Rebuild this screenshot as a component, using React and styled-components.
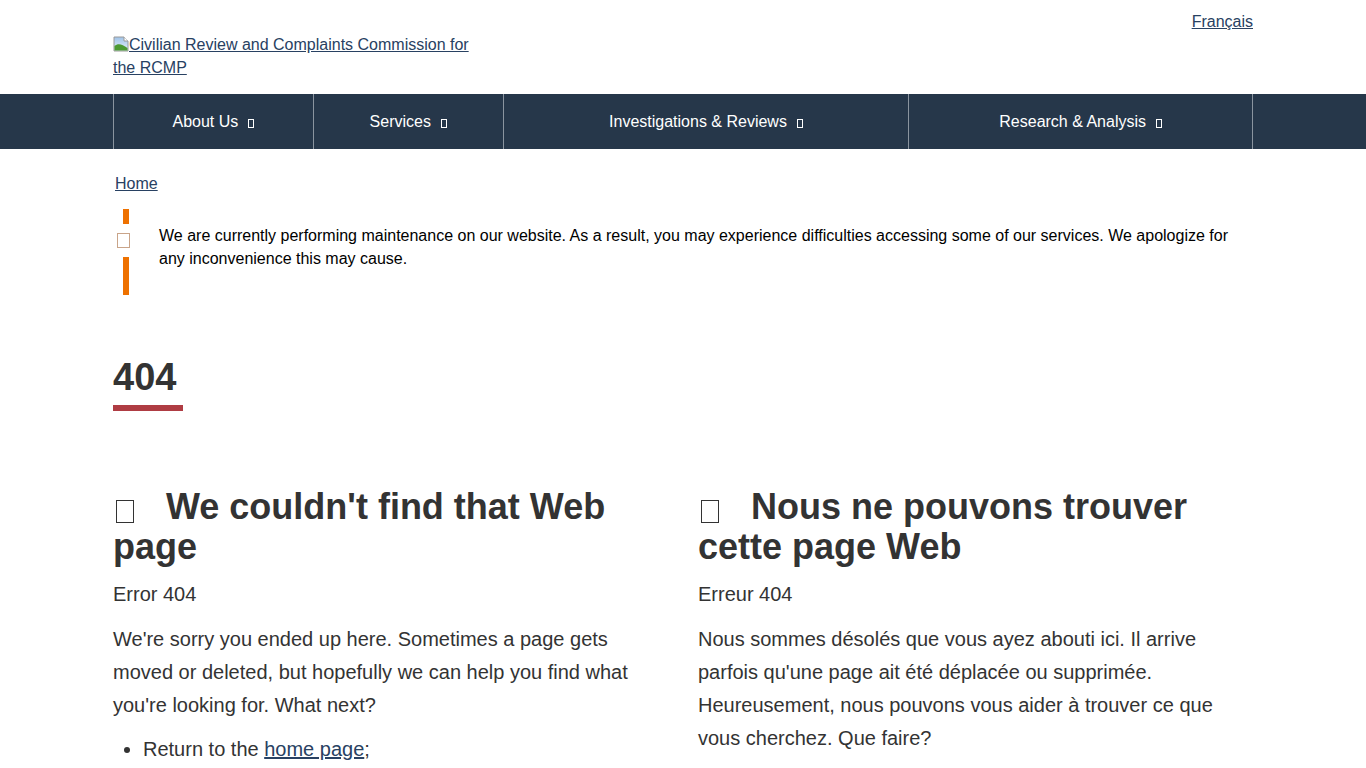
import React from 'react';
import styled, { createGlobalStyle } from 'styled-components';

const GlobalStyle = createGlobalStyle`
    body {
        margin: 0;
        background: #ffffff;
        color: #333333;
        font-family: "Liberation Sans", Arial, sans-serif;
        font-size: 16px;
    }
`;

const menu = [
    { label: 'About Us', width: 200 },
    { label: 'Services', width: 190 },
    { label: 'Investigations & Reviews', width: 406 },
    { label: 'Research & Analysis', width: 344 }
];

function BrokenImage() {
    return (
        <svg width="16" height="16" viewBox="0 0 16 16" style={{ verticalAlign: '-2px' }}>
            <defs>
                <linearGradient id="sky" x1="0" y1="0" x2="0" y2="1">
                    <stop offset="0" stopColor="#9fc3e8" />
                    <stop offset="1" stopColor="#e6f0fa" />
                </linearGradient>
            </defs>
            <path d="M1 1 H11 L15 5 V15 H1 Z" fill="url(#sky)" stroke="#9a9a9a" />
            <path d="M1.5 14.5 L1.5 10 C5 7 9 8 14.5 12 L14.5 14.5 Z" fill="#4c9a32" />
            <path d="M11 1 V5 H15" fill="#ffffff" stroke="#9a9a9a" />
        </svg>
    );
}

export default function App() {
    return (
        <>
            <GlobalStyle />
            <Header>
                <Container>
                    <LangBar>
                        <Link href="#">Français</Link>
                    </LangBar>
                    <Logo href="#">
                        <BrokenImage />Civilian Review and Complaints Commission for the RCMP
                    </Logo>
                </Container>
            </Header>

            <Nav>
                <Container>
                    <Menu>
                        {menu.map((item) => (
                            <MenuItem key={item.label} $width={item.width}>
                                {item.label}
                                <Tofu />
                            </MenuItem>
                        ))}
                        <MenuEnd />
                    </Menu>
                </Container>
            </Nav>

            <Container>
                <Breadcrumb>
                    <Link href="#">Home</Link>
                </Breadcrumb>

                <Alert>
                    <AlertIcon>
                        <AlertTofu />
                    </AlertIcon>
                    We are currently performing maintenance on our website. As a result, you may experience difficulties accessing some of our services. We apologize for any inconvenience this may cause.
                </Alert>

                <PageTitle>404</PageTitle>

                <Row>
                    <Column>
                        <Heading>
                            <HeadingTofu />We couldn't find that Web page
                        </Heading>
                        <Text>Error 404</Text>
                        <Text>
                            We're sorry you ended up here. Sometimes a page gets moved or deleted, but hopefully we can help you find what you're looking for. What next?
                        </Text>
                        <List>
                            <li>Return to the <Link href="#">home page</Link>;</li>
                        </List>
                    </Column>
                    <Column>
                        <Heading>
                            <HeadingTofu />Nous ne pouvons trouver cette page Web
                        </Heading>
                        <Text>Erreur 404</Text>
                        <Text>
                            Nous sommes désolés que vous ayez abouti ici. Il arrive parfois qu'une page ait été déplacée ou supprimée. Heureusement, nous pouvons vous aider à trouver ce que vous cherchez. Que faire?
                        </Text>
                        <List>
                            <li>Retournez à la <Link href="#">page d'accueil</Link>;</li>
                        </List>
                    </Column>
                </Row>
            </Container>
        </>
    );
}

const Container = styled.div`
    width: 1140px;
    margin: 0 auto;
`;

const Header = styled.header`
    padding-top: 10px;
    padding-bottom: 15px;
`;

const LangBar = styled.div`
    display: flex;
    justify-content: flex-end;
    line-height: 23px;
`;

const Link = styled.a`
    color: #284162;
    text-decoration: underline;
`;

const Logo = styled.a`
    display: block;
    width: 365px;
    line-height: 23px;
    color: #284162;
    text-decoration: underline;
`;

const Nav = styled.nav`
    background: #26374a;
`;

const Menu = styled.ul`
    display: flex;
    margin: 0;
    padding: 0;
    list-style: none;
    height: 55px;
`;

const MenuItem = styled.li`
    display: flex;
    align-items: center;
    justify-content: center;
    width: ${(props) => props.$width}px;
    box-sizing: border-box;
    border-left: 1px solid #8a949f;
    color: #ffffff;
    font-size: 16px;
`;

const MenuEnd = styled.li`
    border-left: 1px solid #8a949f;
`;

const Tofu = styled.span`
    display: inline-block;
    width: 4px;
    height: 7px;
    margin-left: 10px;
    margin-top: 4px;
    border: 1px solid #ffffff;
`;

const Breadcrumb = styled.div`
    padding: 23px 0 0 2px;
    line-height: 23px;
    margin-bottom: 14px;
`;

const Alert = styled.div`
    position: relative;
    margin-left: 10px;
    border-left: 6px solid #ee7100;
    padding: 15px 0 25px 30px;
    color: #000000;
    font-size: 16px;
    line-height: 23px;
`;

const AlertIcon = styled.span`
    position: absolute;
    left: -12px;
    top: 15px;
    width: 18px;
    height: 33px;
    display: flex;
    align-items: center;
    justify-content: flex-start;
    background: #ffffff;
`;

const AlertTofu = styled.span`
    width: 11px;
    height: 13px;
    border: 1px solid #c9a489;
`;

const PageTitle = styled.h1`
    display: inline-block;
    margin: 61px 0 0;
    padding-bottom: 7px;
    border-bottom: 6px solid #af3c43;
    width: 70px;
    font-size: 38px;
    line-height: 42px;
    font-weight: 700;
    color: #333333;
`;

const Row = styled.div`
    display: grid;
    grid-template-columns: 555px 555px;
    column-gap: 30px;
    margin-top: 76px;
`;

const Column = styled.div`
    min-width: 0;
`;

const Heading = styled.h2`
    margin: 0 0 11px;
    font-size: 36px;
    line-height: 40px;
    font-weight: 700;
    color: #333333;
`;

const HeadingTofu = styled.span`
    display: inline-block;
    box-sizing: border-box;
    width: 18px;
    height: 23px;
    margin: 0 32px 0 3px;
    border: 1px solid #333333;
    vertical-align: -4px;
`;

const Text = styled.p`
    margin: 0 0 11.5px;
    font-size: 20px;
    line-height: 33px;
    color: #333333;
`;

const List = styled.ul`
    margin: 0;
    padding-left: 30px;
    font-size: 20px;
    line-height: 33px;
`;
